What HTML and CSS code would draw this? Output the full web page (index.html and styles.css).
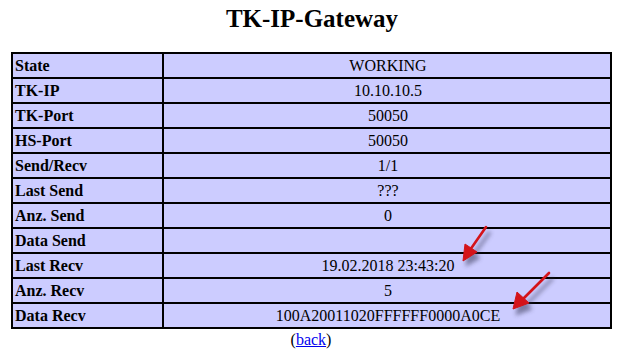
FILE: index.html
```html
<!DOCTYPE html>
<html>
<head>
<meta charset="utf-8">
<link rel="stylesheet" href="styles.css">
</head>
<body>
<h1 class="title">TK-IP-Gateway</h1>
<div class="wrap">
<table class="status">
<tr><th>State</th><td>WORKING</td></tr>
<tr><th>TK-IP</th><td>10.10.10.5</td></tr>
<tr><th>TK-Port</th><td>50050</td></tr>
<tr><th>HS-Port</th><td>50050</td></tr>
<tr><th>Send/Recv</th><td>1/1</td></tr>
<tr><th>Last Send</th><td>???</td></tr>
<tr><th>Anz. Send</th><td>0</td></tr>
<tr><th>Data Send</th><td></td></tr>
<tr><th>Last Recv</th><td>19.02.2018 23:43:20</td></tr>
<tr><th>Anz. Recv</th><td>5</td></tr>
<tr><th>Data Recv</th><td>100A20011020FFFFFF0000A0CE</td></tr>
</table>
<svg class="arrows" width="624" height="359" viewBox="0 0 624 359">
  <defs>
    <filter id="sh" x="-50%" y="-50%" width="200%" height="200%">
      <feGaussianBlur stdDeviation="2.2"/>
    </filter>
  </defs>
  <g opacity="0.55" fill="#3a3a5a" stroke="#3a3a5a" filter="url(#sh)">
    <line x1="490" y1="232" x2="472" y2="257" stroke-width="3"/>
    <polygon points="466,266 468,250 480,258"/>
    <line x1="553" y1="278" x2="525" y2="306" stroke-width="3"/>
    <polygon points="516,315 520,298 532,309"/>
  </g>
  <g fill="#d4141a" stroke="#d4141a">
    <line x1="486" y1="227" x2="470" y2="250" stroke-width="2.6" stroke-linecap="round"/>
    <polygon points="463,261 465,244 477,252"/>
    <line x1="549" y1="273" x2="523" y2="299" stroke-width="2.6" stroke-linecap="round"/>
    <polygon points="513,309 517,292 529,303"/>
  </g>
</svg>
</div>
<p class="back">(<a href="#">back</a>)</p>
</body>
</html>
```
FILE: styles.css
```css
html, body {
  margin: 0;
  padding: 0;
  background: #ffffff;
}
body {
  font-family: "Liberation Serif", "Times New Roman", serif;
  color: #000000;
  font-size: 16px;
}
.title {
  margin: 0;
  padding-top: 5px;
  height: 47px;
  font-size: 25px;
  line-height: 28px;
  font-weight: bold;
  text-align: center;
}
.wrap {
  position: relative;
  padding: 0 12px 0 11px;
}
.status {
  width: 601px;
  border-collapse: collapse;
  background: #ccccff;
  border: 2px solid #000;
}
.status th,
.status td {
  border: 2px solid #000;
  height: 23px;
  padding: 1px 0 0 2px;
  line-height: 22px;
  box-sizing: border-box;
}
.status th {
  width: 151px;
  text-align: left;
  font-weight: bold;
}
.status td {
  text-align: center;
}
.arrows {
  position: absolute;
  left: 0;
  top: -52px;
  pointer-events: none;
}
.back {
  margin: 0;
  text-align: center;
  line-height: 22px;
  padding-right: 2px;
}
.back a {
  color: #0000ee;
}
```
